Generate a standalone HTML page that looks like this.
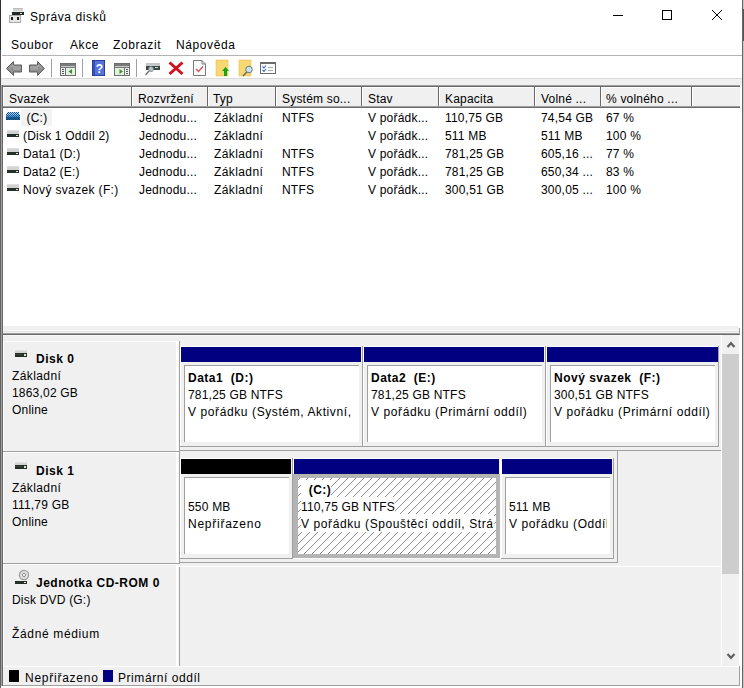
<!DOCTYPE html>
<html><head><meta charset="utf-8">
<style>
*{margin:0;padding:0;box-sizing:border-box}
html,body{width:744px;height:688px;overflow:hidden;background:#fff}
body{position:relative;font-family:"Liberation Sans",sans-serif;font-size:12px;color:#000}
.a{position:absolute}
.t{position:absolute;white-space:pre;font-size:12px;line-height:14px;color:#000;letter-spacing:0.2px}
.m{letter-spacing:0.6px}
.b{font-weight:bold}
.r{position:absolute}
</style></head><body>

<!-- window borders -->
<div class="a" style="left:0;top:0;width:1px;height:688px;background:#626262"></div>
<div class="a" style="left:0;top:0;width:1px;height:50px;background:#2e2e2e"></div>
<div class="a" style="left:0;top:50px;width:1px;height:35px;background:#505050"></div>
<div class="a" style="left:742px;top:0;width:1px;height:688px;background:#666"></div>
<div class="a" style="left:743px;top:0;width:1px;height:688px;background:#c4c4c4"></div>
<div class="a" style="left:743px;top:9px;width:1px;height:32px;background:#555"></div>

<!-- title bar -->
<svg class="a" style="left:9px;top:7px" width="16" height="16" viewBox="0 0 16 16" shape-rendering="crispEdges">
  <rect x="4" y="1" width="10" height="3" fill="#d2d2d2"/>
  <rect x="4" y="1" width="10" height="1" fill="#bdbdbd"/>
  <rect x="3" y="4" width="12" height="1" fill="#e8e8e8"/>
  <rect x="3" y="5" width="12" height="3" fill="#222a24"/>
  <rect x="11" y="6" width="2" height="1" fill="#d8f0d8"/>
  <rect x="0" y="8" width="12" height="8" fill="#a8a8a8"/>
  <rect x="1" y="9" width="10" height="6" fill="#e6e6e6"/>
  <rect x="2" y="10" width="2" height="3" fill="#1a1a1a"/>
  <rect x="8" y="10" width="2" height="3" fill="#1a1a1a"/>
</svg>
<div class="t m" style="left:30px;top:10px">Správa disků</div>
<div class="a" style="left:613px;top:15px;width:10px;height:1px;background:#000"></div>
<div class="a" style="left:662px;top:10px;width:10px;height:10px;border:1px solid #000"></div>
<svg class="a" style="left:712px;top:10px" width="10" height="10" shape-rendering="crispEdges"><rect x="0" y="0" width="1" height="1"/><rect x="9" y="0" width="1" height="1"/><rect x="1" y="1" width="1" height="1"/><rect x="8" y="1" width="1" height="1"/><rect x="2" y="2" width="1" height="1"/><rect x="7" y="2" width="1" height="1"/><rect x="3" y="3" width="1" height="1"/><rect x="6" y="3" width="1" height="1"/><rect x="4" y="4" width="1" height="1"/><rect x="5" y="4" width="1" height="1"/><rect x="5" y="5" width="1" height="1"/><rect x="4" y="5" width="1" height="1"/><rect x="6" y="6" width="1" height="1"/><rect x="3" y="6" width="1" height="1"/><rect x="7" y="7" width="1" height="1"/><rect x="2" y="7" width="1" height="1"/><rect x="8" y="8" width="1" height="1"/><rect x="1" y="8" width="1" height="1"/><rect x="9" y="9" width="1" height="1"/><rect x="0" y="9" width="1" height="1"/></svg>

<!-- menu -->
<div class="t m" style="left:11px;top:38px">Soubor</div>
<div class="t m" style="left:70px;top:38px">Akce</div>
<div class="t m" style="left:113px;top:38px">Zobrazit</div>
<div class="t m" style="left:176px;top:38px">Nápověda</div>
<div class="a" style="left:2px;top:55px;width:740px;height:1px;background:#b4b4b4"></div>

<!-- toolbar -->
<svg class="a" style="left:0;top:56px" width="290" height="22" viewBox="0 56 290 22">
  <!-- back -->
  <path d="M6.5 68.5L13.5 61.5V65H21.5V72H13.5V75.5Z" fill="#8e8e8e" stroke="#5e5e5e" stroke-width="1" stroke-linejoin="round"/>
  <path d="M9 68.5L13 65V67H20V69H13" fill="none" stroke="#b0b0b0" stroke-width="1"/>
  <!-- forward -->
  <path d="M44.5 68.5L37.5 61.5V65H29.5V72H37.5V75.5Z" fill="#8e8e8e" stroke="#5e5e5e" stroke-width="1" stroke-linejoin="round"/>
  <path d="M42 68.5L38 65V67H31V69H38" fill="none" stroke="#b0b0b0" stroke-width="1"/>
  <!-- separators -->
  <rect x="51" y="59" width="1" height="18" fill="#a0a0a0"/>
  <rect x="82" y="59" width="1" height="18" fill="#a0a0a0"/>
  <rect x="136" y="59" width="1" height="18" fill="#a0a0a0"/>
  <!-- console tree -->
  <rect x="60.5" y="63.5" width="15" height="12" fill="#eef3fa" stroke="#6e6e6e"/>
  <rect x="61" y="64" width="14" height="2" fill="#7a7a7a"/>
  <rect x="61" y="66" width="14" height="1" fill="#c8c8c8"/>
  <rect x="61" y="67" width="14" height="1" fill="#7a7a7a"/>
  <rect x="65" y="68" width="1" height="7" fill="#6e6e6e"/>
  <rect x="66" y="68" width="9" height="7" fill="#e2f2dc"/>
  <rect x="62" y="69" width="2" height="1" fill="#555"/><rect x="62" y="71" width="2" height="1" fill="#555"/><rect x="62" y="73" width="2" height="1" fill="#555"/>
  <path d="M68.5 71.5L72 69V74Z" fill="#4a8a3a"/>
  <!-- help -->
  <rect x="92" y="60" width="13" height="16" fill="#2a3c9c"/>
  <rect x="93" y="61" width="11" height="14" fill="#5572d8"/>
  <rect x="93" y="61" width="2" height="14" fill="#3a52b8"/>
  <text x="99.5" y="73" font-family="Liberation Sans" font-weight="bold" font-size="12" fill="#fff" text-anchor="middle">?</text>
  <!-- action pane -->
  <rect x="114.5" y="63.5" width="15" height="12" fill="#eef3fa" stroke="#6e6e6e"/>
  <rect x="115" y="64" width="14" height="2" fill="#7a7a7a"/>
  <rect x="115" y="66" width="14" height="1" fill="#c8c8c8"/>
  <rect x="115" y="67" width="14" height="1" fill="#7a7a7a"/>
  <rect x="124" y="68" width="1" height="7" fill="#6e6e6e"/>
  <rect x="115" y="68" width="9" height="7" fill="#e2f2dc"/>
  <rect x="126" y="69" width="2" height="1" fill="#555"/><rect x="126" y="71" width="2" height="1" fill="#555"/><rect x="126" y="73" width="2" height="1" fill="#555"/>
  <path d="M119.5 69V74L123 71.5Z" fill="#4a8a3a"/>
  <!-- connect -->
  <rect x="146" y="63" width="14" height="3" fill="#c4c8c8"/>
  <rect x="146" y="66" width="14" height="4" fill="#3c4646"/>
  <rect x="155" y="67" width="3" height="1" fill="#c0e0c0"/>
  <circle cx="151" cy="69" r="2.5" fill="#b8c8d0" stroke="#777" stroke-width="0.8"/>
  <path d="M149 71L145.5 75" stroke="#707070" stroke-width="1.3"/>
  <!-- red x -->
  <path d="M169.5 62.5L182.5 74M182.5 62.5L169.5 74" stroke="#d0101c" stroke-width="3"/>
  <!-- doc check -->
  <path d="M193.5 60.5H202L205.5 64V75.5H193.5Z" fill="#fafafa" stroke="#7a7a7a"/>
  <path d="M202 60.5V64H205.5" fill="none" stroke="#7a7a7a"/>
  <path d="M196 69L198.5 71.5L203 66.5" fill="none" stroke="#e05060" stroke-width="1.4"/>
  <!-- folder up -->
  <rect x="216" y="60" width="12" height="16" fill="#f8d870" stroke="#e8c050" stroke-width="0.6"/>
  <path d="M225.5 67L229 71H227V76H224V71H222Z" fill="#1aa01a"/>
  <!-- folder magnifier -->
  <rect x="239" y="60" width="12" height="16" fill="#f8d870" stroke="#e8c050" stroke-width="0.6"/>
  <circle cx="249" cy="69.5" r="3.3" fill="#c8e4f0" stroke="#6a7a80" stroke-width="1"/>
  <path d="M246.8 72L243 76" stroke="#6a6a6a" stroke-width="1.5"/>
  <!-- checklist -->
  <rect x="260.5" y="62.5" width="15" height="11" fill="#fafcff" stroke="#6a6a6a"/>
  <rect x="260" y="62" width="16" height="2" fill="#6a6a6a"/>
  <path d="M262.5 66.5L264 68L266 65.5M262.5 70L264 71.5L266 69" fill="none" stroke="#3a6ad0" stroke-width="1.1"/>
  <rect x="268" y="67" width="5" height="1" fill="#b0b0b0"/><rect x="268" y="70" width="5" height="1" fill="#b0b0b0"/>
</svg>

<div class="a" style="left:1px;top:78px;width:741px;height:1px;background:#dadada"></div>
<div class="a" style="left:1px;top:79px;width:741px;height:6px;background:#f0f0f0"></div>

<!-- list view -->
<div class="a" style="left:1px;top:85px;width:1px;height:601px;background:#a0a0a0"></div>
<div class="a" style="left:2px;top:85px;width:1px;height:601px;background:#696969"></div>
<div class="a" style="left:3px;top:85px;width:737px;height:1px;background:#a0a0a0"></div>
<div class="a" style="left:3px;top:86px;width:737px;height:1px;background:#696969"></div>
<div class="a" style="left:3px;top:87px;width:737px;height:1px;background:#fff"></div>
<div class="a" style="left:3px;top:88px;width:737px;height:18px;background:#f0f0f0"></div>
<div class="a" style="left:3px;top:106px;width:737px;height:1px;background:#a0a0a0"></div>
<div class="a" style="left:3px;top:107px;width:737px;height:1px;background:#696969"></div>
<div class="a" style="left:3px;top:87px;width:1px;height:19px;background:#fff"></div>
<div class="a" style="left:131px;top:87px;width:1px;height:19px;background:#696969"></div>
<div class="a" style="left:132px;top:87px;width:1px;height:19px;background:#fff"></div>
<div class="a" style="left:207px;top:87px;width:1px;height:19px;background:#696969"></div>
<div class="a" style="left:208px;top:87px;width:1px;height:19px;background:#fff"></div>
<div class="a" style="left:275px;top:87px;width:1px;height:19px;background:#696969"></div>
<div class="a" style="left:276px;top:87px;width:1px;height:19px;background:#fff"></div>
<div class="a" style="left:361px;top:87px;width:1px;height:19px;background:#696969"></div>
<div class="a" style="left:362px;top:87px;width:1px;height:19px;background:#fff"></div>
<div class="a" style="left:438px;top:87px;width:1px;height:19px;background:#696969"></div>
<div class="a" style="left:439px;top:87px;width:1px;height:19px;background:#fff"></div>
<div class="a" style="left:534px;top:87px;width:1px;height:19px;background:#696969"></div>
<div class="a" style="left:535px;top:87px;width:1px;height:19px;background:#fff"></div>
<div class="a" style="left:600px;top:87px;width:1px;height:19px;background:#696969"></div>
<div class="a" style="left:601px;top:87px;width:1px;height:19px;background:#fff"></div>
<div class="a" style="left:691px;top:87px;width:1px;height:19px;background:#696969"></div>
<div class="a" style="left:692px;top:87px;width:1px;height:19px;background:#fff"></div>
<div class="t" style="left:9px;top:92px">Svazek</div>
<div class="t" style="left:138px;top:92px">Rozvržení</div>
<div class="t" style="left:213px;top:92px">Typ</div>
<div class="t" style="left:282px;top:92px">Systém so...</div>
<div class="t" style="left:368px;top:92px">Stav</div>
<div class="t" style="left:445px;top:92px">Kapacita</div>
<div class="t" style="left:541px;top:92px">Volné ...</div>
<div class="t" style="left:606px;top:92px">% volného ...</div>
<div class="a" style="left:3px;top:326px;width:736px;height:4px;background:#f0f0f0"></div><div class="a" style="left:3px;top:330px;width:736px;height:1px;background:#f8f8f8"></div><div class="a" style="left:3px;top:331px;width:736px;height:1px;background:#e3e3e3"></div><div class="a" style="left:3px;top:332px;width:736px;height:1px;background:#f0f0f0"></div>
<div class="a" style="left:3px;top:333px;width:737px;height:1px;background:#a0a0a0"></div>
<div class="a" style="left:3px;top:334px;width:737px;height:1px;background:#696969"></div>
<div class="a" style="left:739px;top:328px;width:1px;height:6px;background:#a0a0a0"></div>
<div class="a" style="left:21px;top:109px;width:31px;height:17px;background:#f3f3f3"></div>
<div class="t" style="left:23px;top:111px"> (C:)</div>
<div class="t" style="left:139px;top:111px">Jednodu...</div>
<div class="t" style="left:214px;top:111px;letter-spacing:0.4px">Základní</div>
<div class="t" style="left:282px;top:111px">NTFS</div>
<div class="t" style="left:368px;top:111px">V pořádk...</div>
<div class="t" style="left:445px;top:111px">110,75 GB</div>
<div class="t" style="left:541px;top:111px">74,54 GB</div>
<div class="t" style="left:606px;top:111px">67 %</div>
<svg class="a" style="left:6px;top:112px" width="14" height="8" shape-rendering="crispEdges"><rect x="1" y="0" width="1" height="1" fill="#a4dcfa"/><rect x="2" y="0" width="1" height="1" fill="#1a4c8c"/><rect x="3" y="0" width="1" height="1" fill="#a4dcfa"/><rect x="4" y="0" width="1" height="1" fill="#1a4c8c"/><rect x="5" y="0" width="1" height="1" fill="#a4dcfa"/><rect x="6" y="0" width="1" height="1" fill="#1a4c8c"/><rect x="7" y="0" width="1" height="1" fill="#a4dcfa"/><rect x="8" y="0" width="1" height="1" fill="#1a4c8c"/><rect x="9" y="0" width="1" height="1" fill="#a4dcfa"/><rect x="10" y="0" width="1" height="1" fill="#1a4c8c"/><rect x="11" y="0" width="1" height="1" fill="#a4dcfa"/><rect x="12" y="0" width="1" height="1" fill="#1a4c8c"/><rect x="1" y="1" width="1" height="1" fill="#1a4c8c"/><rect x="2" y="1" width="1" height="1" fill="#a4dcfa"/><rect x="3" y="1" width="1" height="1" fill="#1a4c8c"/><rect x="4" y="1" width="1" height="1" fill="#a4dcfa"/><rect x="5" y="1" width="1" height="1" fill="#1a4c8c"/><rect x="6" y="1" width="1" height="1" fill="#a4dcfa"/><rect x="7" y="1" width="1" height="1" fill="#1a4c8c"/><rect x="8" y="1" width="1" height="1" fill="#a4dcfa"/><rect x="9" y="1" width="1" height="1" fill="#1a4c8c"/><rect x="10" y="1" width="1" height="1" fill="#a4dcfa"/><rect x="11" y="1" width="1" height="1" fill="#1a4c8c"/><rect x="12" y="1" width="1" height="1" fill="#a4dcfa"/><rect x="0" y="2" width="1" height="1" fill="#1a4c8c"/><rect x="1" y="2" width="1" height="1" fill="#a4dcfa"/><rect x="2" y="2" width="1" height="1" fill="#1a4c8c"/><rect x="3" y="2" width="1" height="1" fill="#a4dcfa"/><rect x="4" y="2" width="1" height="1" fill="#1a4c8c"/><rect x="5" y="2" width="1" height="1" fill="#a4dcfa"/><rect x="6" y="2" width="1" height="1" fill="#1a4c8c"/><rect x="7" y="2" width="1" height="1" fill="#a4dcfa"/><rect x="8" y="2" width="1" height="1" fill="#1a4c8c"/><rect x="9" y="2" width="1" height="1" fill="#a4dcfa"/><rect x="10" y="2" width="1" height="1" fill="#1a4c8c"/><rect x="11" y="2" width="1" height="1" fill="#a4dcfa"/><rect x="12" y="2" width="1" height="1" fill="#1a4c8c"/><rect x="13" y="2" width="1" height="1" fill="#a4dcfa"/><rect x="0" y="3" width="1" height="1" fill="#5aaee0"/><rect x="1" y="3" width="1" height="1" fill="#1a4c8c"/><rect x="2" y="3" width="1" height="1" fill="#5aaee0"/><rect x="3" y="3" width="1" height="1" fill="#1a4c8c"/><rect x="4" y="3" width="1" height="1" fill="#5aaee0"/><rect x="5" y="3" width="1" height="1" fill="#1a4c8c"/><rect x="6" y="3" width="1" height="1" fill="#5aaee0"/><rect x="7" y="3" width="1" height="1" fill="#1a4c8c"/><rect x="8" y="3" width="1" height="1" fill="#5aaee0"/><rect x="9" y="3" width="1" height="1" fill="#1a4c8c"/><rect x="10" y="3" width="1" height="1" fill="#5aaee0"/><rect x="11" y="3" width="1" height="1" fill="#1a4c8c"/><rect x="12" y="3" width="1" height="1" fill="#5aaee0"/><rect x="13" y="3" width="1" height="1" fill="#1a4c8c"/><rect x="0" y="4" width="1" height="1" fill="#1a4c8c"/><rect x="1" y="4" width="1" height="1" fill="#5aaee0"/><rect x="2" y="4" width="1" height="1" fill="#1a4c8c"/><rect x="3" y="4" width="1" height="1" fill="#5aaee0"/><rect x="4" y="4" width="1" height="1" fill="#1a4c8c"/><rect x="5" y="4" width="1" height="1" fill="#5aaee0"/><rect x="6" y="4" width="1" height="1" fill="#1a4c8c"/><rect x="7" y="4" width="1" height="1" fill="#5aaee0"/><rect x="8" y="4" width="1" height="1" fill="#1a4c8c"/><rect x="9" y="4" width="1" height="1" fill="#5aaee0"/><rect x="10" y="4" width="1" height="1" fill="#1a4c8c"/><rect x="11" y="4" width="1" height="1" fill="#5aaee0"/><rect x="12" y="4" width="1" height="1" fill="#1a4c8c"/><rect x="13" y="4" width="1" height="1" fill="#5aaee0"/><rect x="0" y="5" width="1" height="1" fill="#1e6a98"/><rect x="1" y="5" width="1" height="1" fill="#0c3c70"/><rect x="2" y="5" width="1" height="1" fill="#1e6a98"/><rect x="3" y="5" width="1" height="1" fill="#0c3c70"/><rect x="4" y="5" width="1" height="1" fill="#1e6a98"/><rect x="5" y="5" width="1" height="1" fill="#0c3c70"/><rect x="6" y="5" width="1" height="1" fill="#1e6a98"/><rect x="7" y="5" width="1" height="1" fill="#0c3c70"/><rect x="8" y="5" width="1" height="1" fill="#1e6a98"/><rect x="9" y="5" width="1" height="1" fill="#0c3c70"/><rect x="10" y="5" width="1" height="1" fill="#1e6a98"/><rect x="11" y="5" width="1" height="1" fill="#0c3c70"/><rect x="12" y="5" width="1" height="1" fill="#1e6a98"/><rect x="13" y="5" width="1" height="1" fill="#0c3c70"/><rect x="0" y="6" width="1" height="1" fill="#0c3c70"/><rect x="1" y="6" width="1" height="1" fill="#1e6a98"/><rect x="2" y="6" width="1" height="1" fill="#0c3c70"/><rect x="3" y="6" width="1" height="1" fill="#1e6a98"/><rect x="4" y="6" width="1" height="1" fill="#0c3c70"/><rect x="5" y="6" width="1" height="1" fill="#1e6a98"/><rect x="6" y="6" width="1" height="1" fill="#0c3c70"/><rect x="7" y="6" width="1" height="1" fill="#1e6a98"/><rect x="8" y="6" width="1" height="1" fill="#0c3c70"/><rect x="9" y="6" width="1" height="1" fill="#1e6a98"/><rect x="10" y="6" width="1" height="1" fill="#0c3c70"/><rect x="11" y="6" width="1" height="1" fill="#1e6a98"/><rect x="12" y="6" width="1" height="1" fill="#0c3c70"/><rect x="13" y="6" width="1" height="1" fill="#1e6a98"/><rect x="0" y="7" width="1" height="1" fill="#1e6a98"/><rect x="1" y="7" width="1" height="1" fill="#0c3c70"/><rect x="2" y="7" width="1" height="1" fill="#1e6a98"/><rect x="3" y="7" width="1" height="1" fill="#0c3c70"/><rect x="4" y="7" width="1" height="1" fill="#1e6a98"/><rect x="5" y="7" width="1" height="1" fill="#0c3c70"/><rect x="6" y="7" width="1" height="1" fill="#1e6a98"/><rect x="7" y="7" width="1" height="1" fill="#0c3c70"/><rect x="8" y="7" width="1" height="1" fill="#1e6a98"/><rect x="9" y="7" width="1" height="1" fill="#0c3c70"/><rect x="10" y="7" width="1" height="1" fill="#1e6a98"/><rect x="11" y="7" width="1" height="1" fill="#0c3c70"/><rect x="12" y="7" width="1" height="1" fill="#1e6a98"/><rect x="13" y="7" width="1" height="1" fill="#0c3c70"/></svg>
<div class="t" style="left:23px;top:129px">(Disk 1 Oddíl 2)</div>
<div class="t" style="left:139px;top:129px">Jednodu...</div>
<div class="t" style="left:214px;top:129px;letter-spacing:0.4px">Základní</div>
<div class="t" style="left:368px;top:129px">V pořádk...</div>
<div class="t" style="left:445px;top:129px">511 MB</div>
<div class="t" style="left:541px;top:129px">511 MB</div>
<div class="t" style="left:606px;top:129px">100 %</div>
<svg class="a" style="left:7px;top:130px" width="12" height="7" shape-rendering="crispEdges"><rect x="0" y="0" width="12" height="4" fill="#d2d2d2"/><rect x="0" y="0" width="12" height="1" fill="#e0e0e0"/><rect x="0" y="4" width="12" height="3" fill="#262e28"/><rect x="9" y="5" width="2" height="1" fill="#d8ecd8"/></svg>
<div class="t" style="left:23px;top:147px">Data1 (D:)</div>
<div class="t" style="left:139px;top:147px">Jednodu...</div>
<div class="t" style="left:214px;top:147px;letter-spacing:0.4px">Základní</div>
<div class="t" style="left:282px;top:147px">NTFS</div>
<div class="t" style="left:368px;top:147px">V pořádk...</div>
<div class="t" style="left:445px;top:147px">781,25 GB</div>
<div class="t" style="left:541px;top:147px">605,16 ...</div>
<div class="t" style="left:606px;top:147px">77 %</div>
<svg class="a" style="left:7px;top:148px" width="12" height="7" shape-rendering="crispEdges"><rect x="0" y="0" width="12" height="4" fill="#d2d2d2"/><rect x="0" y="0" width="12" height="1" fill="#e0e0e0"/><rect x="0" y="4" width="12" height="3" fill="#262e28"/><rect x="9" y="5" width="2" height="1" fill="#d8ecd8"/></svg>
<div class="t" style="left:23px;top:165px">Data2 (E:)</div>
<div class="t" style="left:139px;top:165px">Jednodu...</div>
<div class="t" style="left:214px;top:165px;letter-spacing:0.4px">Základní</div>
<div class="t" style="left:282px;top:165px">NTFS</div>
<div class="t" style="left:368px;top:165px">V pořádk...</div>
<div class="t" style="left:445px;top:165px">781,25 GB</div>
<div class="t" style="left:541px;top:165px">650,34 ...</div>
<div class="t" style="left:606px;top:165px">83 %</div>
<svg class="a" style="left:7px;top:166px" width="12" height="7" shape-rendering="crispEdges"><rect x="0" y="0" width="12" height="4" fill="#d2d2d2"/><rect x="0" y="0" width="12" height="1" fill="#e0e0e0"/><rect x="0" y="4" width="12" height="3" fill="#262e28"/><rect x="9" y="5" width="2" height="1" fill="#d8ecd8"/></svg>
<div class="t" style="left:23px;top:183px;letter-spacing:0.35px">Nový svazek (F:)</div>
<div class="t" style="left:139px;top:183px">Jednodu...</div>
<div class="t" style="left:214px;top:183px;letter-spacing:0.4px">Základní</div>
<div class="t" style="left:282px;top:183px">NTFS</div>
<div class="t" style="left:368px;top:183px">V pořádk...</div>
<div class="t" style="left:445px;top:183px">300,51 GB</div>
<div class="t" style="left:541px;top:183px">300,05 ...</div>
<div class="t" style="left:606px;top:183px">100 %</div>
<svg class="a" style="left:7px;top:184px" width="12" height="7" shape-rendering="crispEdges"><rect x="0" y="0" width="12" height="4" fill="#d2d2d2"/><rect x="0" y="0" width="12" height="1" fill="#e0e0e0"/><rect x="0" y="4" width="12" height="3" fill="#262e28"/><rect x="9" y="5" width="2" height="1" fill="#d8ecd8"/></svg>

<!-- graphical view -->
<div class="a" style="left:3px;top:335px;width:718px;height:6px;background:#f0f0f0;"></div>
<div class="a" style="left:3px;top:335px;width:718px;height:1px;background:#fafafa;"></div>
<div class="a" style="left:3px;top:341px;width:718px;height:325px;background:#f0f0f0;"></div>
<div class="a" style="left:721px;top:335px;width:1px;height:331px;background:#fff;"></div>
<div class="a" style="left:722px;top:335px;width:17px;height:331px;background:#f0f0f0;"></div>
<div class="a" style="left:739px;top:335px;width:2px;height:331px;background:#fff;"></div>
<div class="a" style="left:722px;top:354px;width:17px;height:220px;background:#cdcdcd;"></div>
<svg class="a" style="left:726px;top:340px" width="10" height="9" viewBox="0 0 10 9"><path d="M1.5 7L5 3.2L8.5 7" fill="none" stroke="#606060" stroke-width="2.2"/></svg>
<svg class="a" style="left:726px;top:652px" width="10" height="9" viewBox="0 0 10 9"><path d="M1.5 2L5 5.8L8.5 2" fill="none" stroke="#606060" stroke-width="2.2"/></svg>
<div class="a" style="left:176px;top:341px;width:2px;height:325px;background:#fff;"></div>
<div class="a" style="left:178px;top:341px;width:1px;height:325px;background:#f7f7f7;"></div>
<div class="a" style="left:179px;top:341px;width:1px;height:325px;background:#a0a0a0;"></div>
<div class="a" style="left:3px;top:341px;width:176px;height:1px;background:#fff;"></div>
<div class="a" style="left:3px;top:341px;width:1px;height:110px;background:#fff;"></div>
<div class="a" style="left:3px;top:451px;width:176px;height:1px;background:#a0a0a0;"></div>
<div class="a" style="left:3px;top:452px;width:176px;height:1px;background:#fff;"></div>
<div class="a" style="left:179px;top:450px;width:542px;height:1px;background:#a0a0a0;"></div>
<div class="a" style="left:3px;top:452px;width:176px;height:1px;background:#fff;"></div>
<div class="a" style="left:3px;top:452px;width:1px;height:111px;background:#fff;"></div>
<div class="a" style="left:3px;top:563px;width:176px;height:1px;background:#a0a0a0;"></div>
<div class="a" style="left:3px;top:564px;width:176px;height:1px;background:#fff;"></div>
<div class="a" style="left:179px;top:562px;width:439px;height:1px;background:#a0a0a0;"></div>
<div class="a" style="left:3px;top:564px;width:176px;height:1px;background:#fff;"></div>
<div class="a" style="left:3px;top:564px;width:1px;height:102px;background:#fff;"></div>
<svg class="a" style="left:15px;top:350px" width="12" height="8" viewBox="0 0 12 8" shape-rendering="crispEdges"><rect x="0" y="0" width="12" height="3" fill="#d4d4d4"/><rect x="0" y="0" width="12" height="1" fill="#e2e2e2"/><rect x="0" y="3" width="12" height="4" fill="#262e28"/><rect x="0" y="4" width="8" height="1" fill="#3a423c"/><rect x="9" y="4" width="2" height="2" fill="#d8ecd8"/></svg>
<div class="t b" style="left:36px;top:352px;letter-spacing:0.5px;">Disk 0</div>
<div class="t" style="left:12px;top:369px;letter-spacing:0.4px;">Základní</div>
<div class="t" style="left:12px;top:386px;">1863,02 GB</div>
<div class="t" style="left:12px;top:403px;">Online</div>
<svg class="a" style="left:15px;top:462px" width="12" height="8" viewBox="0 0 12 8" shape-rendering="crispEdges"><rect x="0" y="0" width="12" height="3" fill="#d4d4d4"/><rect x="0" y="0" width="12" height="1" fill="#e2e2e2"/><rect x="0" y="3" width="12" height="4" fill="#262e28"/><rect x="0" y="4" width="8" height="1" fill="#3a423c"/><rect x="9" y="4" width="2" height="2" fill="#d8ecd8"/></svg>
<div class="t b" style="left:36px;top:464px;letter-spacing:0.5px;">Disk 1</div>
<div class="t" style="left:12px;top:481px;letter-spacing:0.4px;">Základní</div>
<div class="t" style="left:12px;top:498px;">111,79 GB</div>
<div class="t" style="left:12px;top:515px;">Online</div>
<svg class="a" style="left:15px;top:569px" width="14" height="16" viewBox="0 0 14 16"><circle cx="9" cy="6" r="4.6" fill="#e0e0e0" stroke="#9a9a9a" stroke-width="1.2"/><circle cx="9" cy="6" r="1.6" fill="#fff" stroke="#8a8a8a" stroke-width="1"/><rect x="0" y="12" width="12" height="3" fill="#262e28"/><rect x="9" y="13" width="2" height="1" fill="#e0f0e0"/></svg>
<div class="t b" style="left:36px;top:576px;letter-spacing:0.5px;">Jednotka CD-ROM 0</div>
<div class="t" style="left:12px;top:593px;">Disk DVD (G:)</div>
<div class="t" style="left:12px;top:627px;letter-spacing:0.65px;">Žádné médium</div>
<div class="a" style="left:180px;top:346px;width:183px;height:1px;background:#fff;"></div>
<div class="a" style="left:180px;top:346px;width:1px;height:100px;background:#fff;"></div>
<div class="a" style="left:181px;top:347px;width:180px;height:15px;background:#000080;"></div>
<div class="a" style="left:362px;top:346px;width:1px;height:101px;background:#a0a0a0;"></div>
<div class="a" style="left:180px;top:446px;width:183px;height:1px;background:#a0a0a0;"></div>
<div class="a" style="left:184px;top:365px;width:175px;height:77px;background:#fff;border-top:1px solid #a0a0a0;border-left:1px solid #a0a0a0"></div>
<div class="a" style="left:181px;top:366px;width:175px;height:75px;overflow:hidden"><div class="t" style="left:7px;top:5px;line-height:15px;font-weight:bold;letter-spacing:0.5px;">Data1  (D:)</div><div class="t" style="left:7px;top:22px;line-height:15px;">781,25 GB NTFS</div><div class="t" style="left:7px;top:39px;line-height:15px;letter-spacing:0.6px;">V pořádku (Systém, Aktivní, Primární oddíl)</div></div>
<div class="a" style="left:363px;top:346px;width:183px;height:1px;background:#fff;"></div>
<div class="a" style="left:363px;top:346px;width:1px;height:100px;background:#fff;"></div>
<div class="a" style="left:364px;top:347px;width:180px;height:15px;background:#000080;"></div>
<div class="a" style="left:545px;top:346px;width:1px;height:101px;background:#a0a0a0;"></div>
<div class="a" style="left:363px;top:446px;width:183px;height:1px;background:#a0a0a0;"></div>
<div class="a" style="left:367px;top:365px;width:175px;height:77px;background:#fff;border-top:1px solid #a0a0a0;border-left:1px solid #a0a0a0"></div>
<div class="a" style="left:364px;top:366px;width:175px;height:75px;overflow:hidden"><div class="t" style="left:7px;top:5px;line-height:15px;font-weight:bold;letter-spacing:0.5px;">Data2  (E:)</div><div class="t" style="left:7px;top:22px;line-height:15px;">781,25 GB NTFS</div><div class="t" style="left:7px;top:39px;line-height:15px;letter-spacing:0.6px;">V pořádku (Primární oddíl)</div></div>
<div class="a" style="left:546px;top:346px;width:173px;height:1px;background:#fff;"></div>
<div class="a" style="left:546px;top:346px;width:1px;height:100px;background:#fff;"></div>
<div class="a" style="left:547px;top:347px;width:171px;height:15px;background:#000080;"></div>
<div class="a" style="left:718px;top:346px;width:1px;height:101px;background:#a0a0a0;"></div>
<div class="a" style="left:546px;top:446px;width:173px;height:1px;background:#a0a0a0;"></div>
<div class="a" style="left:550px;top:365px;width:165px;height:77px;background:#fff;border-top:1px solid #a0a0a0;border-left:1px solid #a0a0a0"></div>
<div class="a" style="left:547px;top:366px;width:165px;height:75px;overflow:hidden"><div class="t" style="left:7px;top:5px;line-height:15px;font-weight:bold;letter-spacing:0.5px;">Nový svazek  (F:)</div><div class="t" style="left:7px;top:22px;line-height:15px;">300,51 GB NTFS</div><div class="t" style="left:7px;top:39px;line-height:15px;letter-spacing:0.6px;">V pořádku (Primární oddíl)</div></div>
<div class="a" style="left:180px;top:458px;width:113px;height:1px;background:#fff;"></div>
<div class="a" style="left:180px;top:458px;width:1px;height:100px;background:#fff;"></div>
<div class="a" style="left:181px;top:459px;width:110px;height:15px;background:#000;"></div>
<div class="a" style="left:292px;top:458px;width:1px;height:101px;background:#a0a0a0;"></div>
<div class="a" style="left:180px;top:558px;width:113px;height:1px;background:#a0a0a0;"></div>
<div class="a" style="left:184px;top:477px;width:105px;height:77px;background:#fff;border-top:1px solid #a0a0a0;border-left:1px solid #a0a0a0"></div>
<div class="a" style="left:181px;top:478px;width:105px;height:75px;overflow:hidden"><div class="t" style="left:7px;top:22px;line-height:15px;">550 MB</div><div class="t" style="left:7px;top:39px;line-height:15px;letter-spacing:0.75px;">Nepřiřazeno</div></div>
<div class="a" style="left:293px;top:458px;width:208px;height:1px;background:#fff;"></div>
<div class="a" style="left:293px;top:458px;width:1px;height:100px;background:#fff;"></div>
<div class="a" style="left:294px;top:459px;width:205px;height:15px;background:#000080;"></div>
<div class="a" style="left:500px;top:458px;width:1px;height:101px;background:#fff;"></div>
<div class="a" style="left:293px;top:558px;width:208px;height:1px;background:#fff;"></div>
<div class="a" style="left:293px;top:474px;width:207px;height:84px;background:#b4b4b4;"></div>
<svg class="a" style="left:298px;top:478px" width="198" height="76" shape-rendering="crispEdges"><defs><pattern id="hatch" x="-298" y="-478" width="8" height="8" patternUnits="userSpaceOnUse"><rect x="1" y="0" width="1" height="1" fill="#8c8c8c"/><rect x="0" y="1" width="1" height="1" fill="#8c8c8c"/><rect x="7" y="2" width="1" height="1" fill="#8c8c8c"/><rect x="6" y="3" width="1" height="1" fill="#8c8c8c"/><rect x="5" y="4" width="1" height="1" fill="#8c8c8c"/><rect x="4" y="5" width="1" height="1" fill="#8c8c8c"/><rect x="3" y="6" width="1" height="1" fill="#8c8c8c"/><rect x="2" y="7" width="1" height="1" fill="#8c8c8c"/></pattern></defs><rect width="198" height="76" fill="#fff"/><rect width="198" height="76" fill="url(#hatch)"/></svg>
<div class="a" style="left:294px;top:478px;width:200px;height:75px;overflow:hidden"><div class="t" style="left:7px;top:5px;line-height:15px;padding-top:3px;margin-top:-3px;font-weight:bold;letter-spacing:0.5px;background:#fff;">  (C:)</div><div class="t" style="left:7px;top:22px;line-height:15px;padding-top:3px;margin-top:-3px;background:#fff;">110,75 GB NTFS</div><div class="t" style="left:7px;top:39px;line-height:15px;padding-top:3px;margin-top:-3px;letter-spacing:0.6px;background:#fff;">V pořádku (Spouštěcí oddíl, Stránkovací soubor)</div></div>
<div class="a" style="left:501px;top:458px;width:113px;height:1px;background:#fff;"></div>
<div class="a" style="left:501px;top:458px;width:1px;height:100px;background:#fff;"></div>
<div class="a" style="left:502px;top:459px;width:110px;height:15px;background:#000080;"></div>
<div class="a" style="left:613px;top:458px;width:1px;height:101px;background:#a0a0a0;"></div>
<div class="a" style="left:501px;top:558px;width:113px;height:1px;background:#a0a0a0;"></div>
<div class="a" style="left:505px;top:477px;width:105px;height:77px;background:#fff;border-top:1px solid #a0a0a0;border-left:1px solid #a0a0a0"></div>
<div class="a" style="left:502px;top:478px;width:105px;height:75px;overflow:hidden"><div class="t" style="left:7px;top:22px;line-height:15px;">511 MB</div><div class="t" style="left:7px;top:39px;line-height:15px;letter-spacing:0.6px;">V pořádku (Oddíl pro obnovení)</div></div>
<div class="a" style="left:617px;top:451px;width:1px;height:112px;background:#a0a0a0;"></div>
<div class="a" style="left:180px;top:566px;width:541px;height:1px;background:#fff;"></div>
<div class="a" style="left:179px;top:564px;width:1px;height:3px;background:#fff;"></div>
<div class="a" style="left:3px;top:666px;width:736px;height:1px;background:#fff;"></div>
<div class="a" style="left:3px;top:667px;width:736px;height:18px;background:#f0f0f0;"></div>
<div class="a" style="left:739px;top:666px;width:1px;height:20px;background:#a0a0a0;"></div>
<div class="a" style="left:3px;top:685px;width:737px;height:1px;background:#a0a0a0;"></div>
<div class="a" style="left:9px;top:670px;width:10px;height:12px;background:#000;"></div>
<div class="t" style="left:25px;top:671px;letter-spacing:0.75px;">Nepřiřazeno</div>
<div class="a" style="left:103px;top:670px;width:10px;height:12px;background:#000080;"></div>
<div class="t" style="left:118px;top:671px;letter-spacing:0.56px;">Primární oddíl</div>
</body></html>
